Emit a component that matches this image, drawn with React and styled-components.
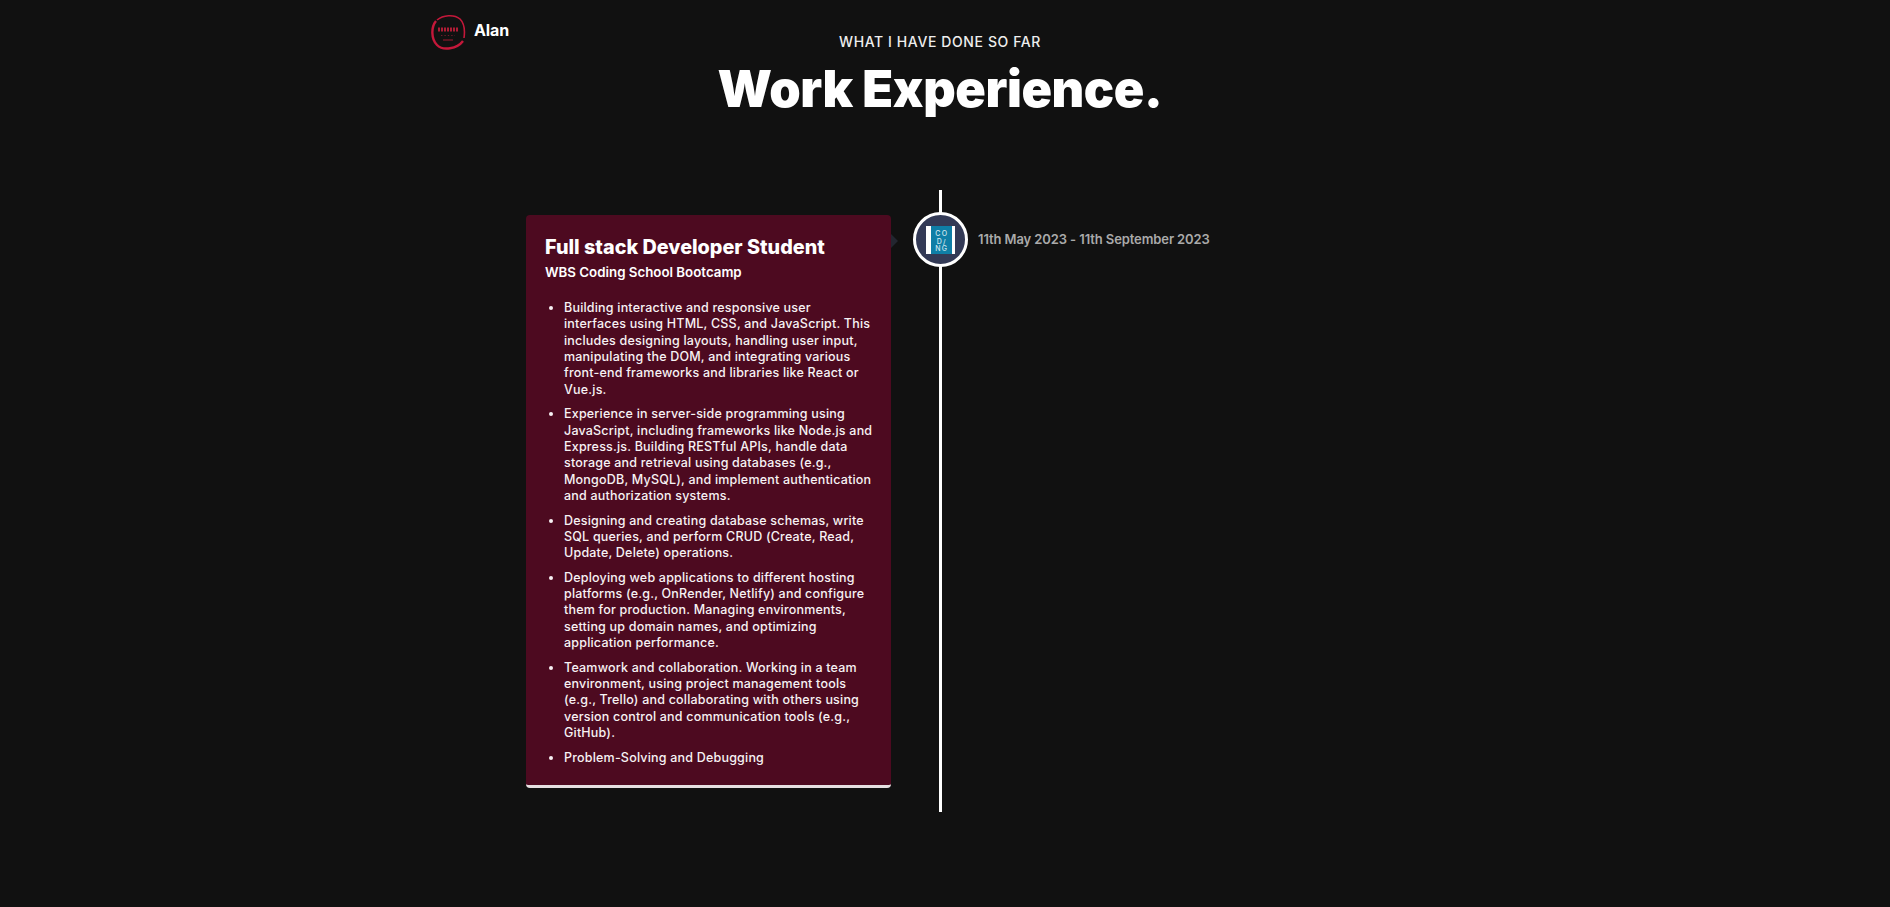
import React from "react";
import styled, { createGlobalStyle } from "styled-components";

const GlobalStyle = createGlobalStyle`
  html, body {
    margin: 0;
    padding: 0;
    background: #111111;
    color: #fff;
    font-family: "Inter", "Open Sans", sans-serif;
  }
`;

const duties = [
  [
    "Building interactive and responsive user",
    "interfaces using HTML, CSS, and JavaScript. This",
    "includes designing layouts, handling user input,",
    "manipulating the DOM, and integrating various",
    "front-end frameworks and libraries like React or",
    "Vue.js.",
  ],
  [
    "Experience in server-side programming using",
    "JavaScript, including frameworks like Node.js and",
    "Express.js. Building RESTful APIs, handle data",
    "storage and retrieval using databases (e.g.,",
    "MongoDB, MySQL), and implement authentication",
    "and authorization systems.",
  ],
  [
    "Designing and creating database schemas, write",
    "SQL queries, and perform CRUD (Create, Read,",
    "Update, Delete) operations.",
  ],
  [
    "Deploying web applications to different hosting",
    "platforms (e.g., OnRender, Netlify) and configure",
    "them for production. Managing environments,",
    "setting up domain names, and optimizing",
    "application performance.",
  ],
  [
    "Teamwork and collaboration. Working in a team",
    "environment, using project management tools",
    "(e.g., Trello) and collaborating with others using",
    "version control and communication tools (e.g.,",
    "GitHub).",
  ],
  ["Problem-Solving and Debugging"],
];

function Logo() {
  return (
    <svg width="36" height="36" viewBox="0 0 36 36" fill="none">
      <path d="M7 6 C13 1 24 0 30 5 C34 9 35 17 34 24" stroke="#c4183a" strokeWidth="1.6" />
      <path d="M33 27 C27 35 13 37 7 31 C1 25 1 13 6 7" stroke="#c4183a" strokeWidth="2.4" />
      <line x1="8" y1="15.5" x2="28" y2="15.5" stroke="#b01c35" strokeWidth="4" strokeDasharray="2 1" />
      <line x1="11" y1="21.5" x2="25" y2="21.5" stroke="#6c1c2a" strokeWidth="1.2" strokeDasharray="1.4 2" />
      <line x1="13" y1="26" x2="23" y2="26" stroke="#8a1a2c" strokeWidth="1.2" />
    </svg>
  );
}

function CodingBadge() {
  return (
    <Badge width="29" height="28" viewBox="0 0 29 28">
      <rect width="29" height="28" fill="#fff" />
      <rect x="5" width="21" height="28" fill="#0f7ea6" />
      <BadgeText x="15.8" y="10">CO</BadgeText>
      <BadgeText x="15.8" y="17.5">D/</BadgeText>
      <BadgeText x="15.8" y="25">NG</BadgeText>
    </Badge>
  );
}

export default function App() {
  return (
    <>
      <GlobalStyle />
      <Page>
        <Nav>
          <Logo />
          <Brand>Alan</Brand>
        </Nav>
        <Header>
          <Eyebrow>WHAT I HAVE DONE SO FAR</Eyebrow>
          <Title>Work Experience.</Title>
        </Header>
        <Timeline>
          <Card>
            <CardTitle>Full stack Developer Student</CardTitle>
            <Company>WBS Coding School Bootcamp</Company>
            <DutyList>
              {duties.map((lines) => (
                <Duty key={lines[0]}>
                  {lines.map((line) => (
                    <DutyLine key={line}>{line}</DutyLine>
                  ))}
                </Duty>
              ))}
            </DutyList>
          </Card>
          <Spine>
            <IconCircle>
              <CodingBadge />
            </IconCircle>
          </Spine>
          <DateText>11th May 2023 - 11th September 2023</DateText>
        </Timeline>
      </Page>
    </>
  );
}

const Page = styled.div`
  width: 1880px;
  height: 907px;
  overflow: hidden;
`;

const Nav = styled.nav`
  display: flex;
  align-items: center;
  gap: 8px;
  height: 36px;
  padding: 14px 0 0 430px;
`;

const Brand = styled.span`
  margin-bottom: 4px;
  font-size: 16px;
  font-weight: 700;
  letter-spacing: -0.1px;
`;

const Header = styled.header`
  display: flex;
  flex-direction: column;
  align-items: center;
  margin-top: -18px;
`;

const Eyebrow = styled.p`
  margin: 0;
  font-size: 14px;
  line-height: 20px;
  font-weight: 500;
  letter-spacing: 0.6px;
  color: #eee;
`;

const Title = styled.h1`
  margin: 7px 0 0;
  font-size: 50.4px;
  line-height: 60px;
  font-weight: 900;
  letter-spacing: -0.4px;
`;

const Timeline = styled.section`
  display: grid;
  grid-template-columns: 365px 98px 1fr;
  align-items: start;
  margin-top: 71px;
  padding: 0 0 0 526px;
`;

const Card = styled.article`
  position: relative;
  box-sizing: border-box;
  height: 573px;
  margin-top: 25px;
  padding: 19px 19px 0;
  background: #4d0a20;
  border-radius: 4px;
  border-bottom: 3px solid #e6e0e2;

  &::after {
    content: "";
    position: absolute;
    top: 19px;
    left: 100%;
    border: 7px solid transparent;
    border-left-color: #232630;
  }
`;

const CardTitle = styled.h3`
  margin: 0;
  font-size: 19.8px;
  line-height: 26px;
  font-weight: 800;
`;

const Company = styled.p`
  margin: 2px 0 0;
  font-size: 13.3px;
  line-height: 20px;
  font-weight: 600;
`;

const DutyList = styled.ul`
  margin: 18px 0 0;
  padding: 0 0 0 19px;
`;

const Duty = styled.li`
  margin-bottom: 8.2px;
  font-size: 12.5px;
  line-height: 16.35px;
  font-weight: 500;
  letter-spacing: 0.2px;
  color: #f7f2f4;
`;

const DutyLine = styled.span`
  display: block;
  white-space: nowrap;
`;

const Spine = styled.div`
  position: relative;
  display: flex;
  justify-content: center;
  height: 622px;

  &::before {
    content: "";
    position: absolute;
    top: 0;
    bottom: 0;
    left: 48px;
    width: 3px;
    background: #fff;
  }
`;

const IconCircle = styled.div`
  position: relative;
  display: flex;
  align-items: center;
  justify-content: center;
  box-sizing: border-box;
  width: 55px;
  height: 55px;
  margin: 22px 0 0 1px;
  background: #333a56;
  border: 3px solid #fff;
  border-radius: 50%;
`;

const Badge = styled.svg`
  flex: none;
`;

const BadgeText = styled.text`
  font-family: "Inter", sans-serif;
  font-size: 7px;
  font-weight: 500;
  letter-spacing: 1.4px;
  text-anchor: middle;
  fill: #cfe6ee;
`;

const DateText = styled.span`
  margin-top: 40px;
  margin-left: -11px;
  font-size: 13px;
  line-height: 18px;
  font-weight: 600;
  letter-spacing: -0.1px;
  color: #aaa;
`;
